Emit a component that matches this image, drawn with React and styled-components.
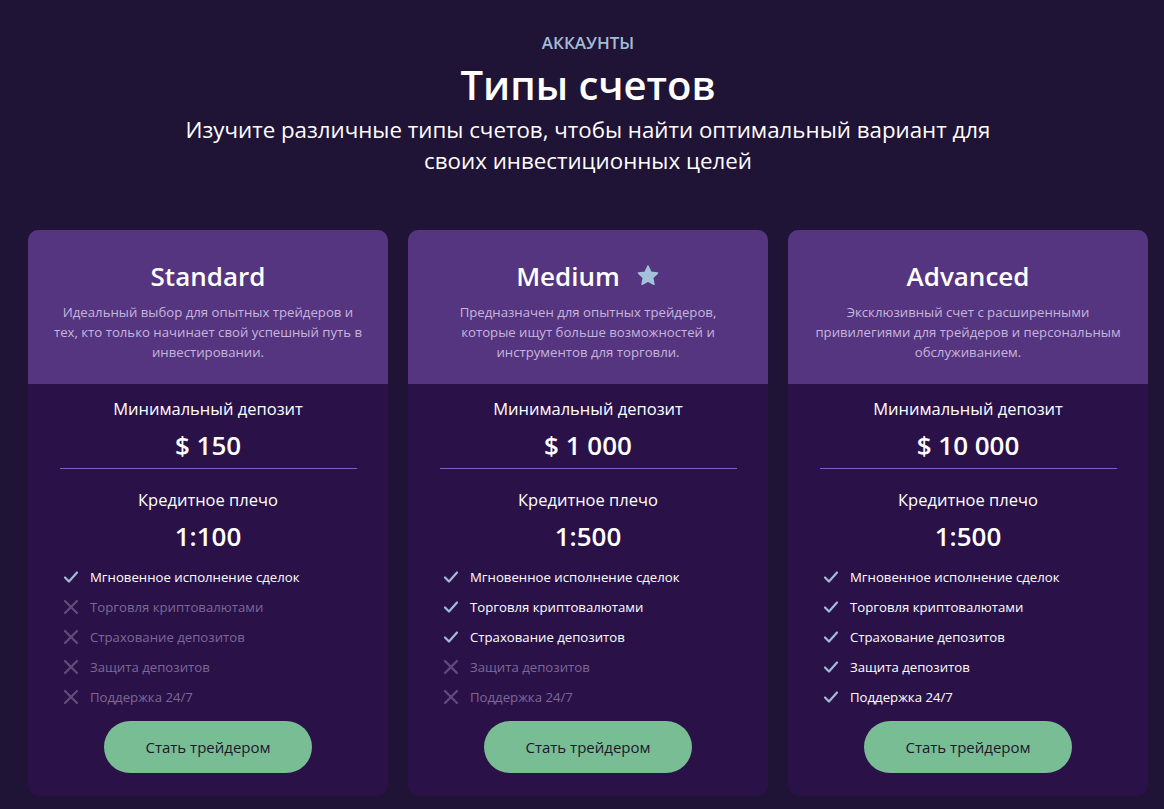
import React from "react";
import styled, { createGlobalStyle } from "styled-components";

const GlobalStyle = createGlobalStyle`
  html, body {
    margin: 0;
    padding: 0;
    background: #1f1336;
    font-family: "Open Sans", "Noto Sans", sans-serif;
  }
`;

const Page = styled.div`
  min-height: 809px;
  background: #1f1336;
  padding: 30px 0 0 28px;
  box-sizing: border-box;
`;

const Wrap = styled.div`
  width: 1120px;
`;

const Header = styled.header`
  display: flex;
  flex-direction: column;
  align-items: center;
  text-align: center;
`;

const Eyebrow = styled.div`
  color: #a3bcd6;
  font-size: 17px;
  font-weight: 600;
  text-transform: uppercase;
  line-height: 26px;
`;

const Title = styled.h1`
  margin: 4px 0 0;
  color: #fff;
  font-size: 40px;
  font-weight: 600;
  line-height: 50px;
`;

const Subtitle = styled.p`
  margin: 4px 0 0;
  max-width: 840px;
  color: #fff;
  font-size: 22.3px;
  line-height: 31px;
`;

const Grid = styled.div`
  display: grid;
  grid-template-columns: repeat(3, 360px);
  gap: 20px;
  margin-top: 54px;
`;

const Card = styled.div`
  background: #2a1249;
  border-radius: 10px;
  overflow: hidden;
  display: flex;
  flex-direction: column;
  height: 566px;
`;

const CardTop = styled.div`
  background: #55357f;
  height: 154px;
  box-sizing: border-box;
  padding: 28px 20px 0;
  text-align: center;
`;

const CardName = styled.h2`
  margin: 0;
  color: #fff;
  font-size: 26px;
  font-weight: 600;
  line-height: 36px;
  display: flex;
  justify-content: center;
  align-items: center;
  gap: 16px;
`;

const CardDesc = styled.p`
  margin: 8px 0 0;
  color: #c6b5dc;
  font-size: 13.2px;
  line-height: 20px;
`;

const CardBody = styled.div`
  display: flex;
  flex-direction: column;
  align-items: center;
  padding: 12px 32px 0;
`;

const Label = styled.div`
  color: #fff;
  font-size: 16.5px;
  line-height: 26px;
`;

const Value = styled.div`
  color: #fff;
  font-size: 26px;
  font-weight: 600;
  line-height: 34px;
  margin-top: 6px;
`;

const Divider = styled.div`
  width: 297px;
  height: 1px;
  background: #7b5fc4;
  margin: 6px 0 18px;
`;

const Features = styled.ul`
  list-style: none;
  margin: 9px 0 0;
  padding: 0 0 0 3px;
  align-self: stretch;
`;

const Feature = styled.li`
  display: flex;
  align-items: center;
  gap: 11px;
  height: 30px;
  font-size: 13.2px;
  color: ${(p) => (p.on ? "#ffffff" : "#7c6896")};
`;

const Button = styled.button`
  margin-top: 9px;
  width: 208px;
  height: 52px;
  border: none;
  border-radius: 26px;
  background: #78bd93;
  color: #1d1530;
  font-family: inherit;
  font-size: 15px;
  cursor: pointer;
`;

const Check = () => (
  <svg width="16" height="16" viewBox="0 0 16 16" fill="none">
    <path d="M2 8.5l4 4 8-9" stroke="#a3bcd6" strokeWidth="2.2" strokeLinecap="round" strokeLinejoin="round" />
  </svg>
);

const Cross = () => (
  <svg width="16" height="16" viewBox="0 0 16 16" fill="none">
    <path d="M2 2l12 12M14 2L2 14" stroke="#5f4c7a" strokeWidth="2.3" strokeLinecap="round" />
  </svg>
);

const Star = () => (
  <svg width="24" height="24" viewBox="0 0 24 24">
    <path
      d="M12 2.2l2.9 6.1 6.6.8-4.9 4.6 1.3 6.6L12 17.1l-5.9 3.2 1.3-6.6-4.9-4.6 6.6-.8z"
      fill="#a3c1da"
      stroke="#a3c1da"
      strokeWidth="1.6"
      strokeLinejoin="round"
    />
  </svg>
);

const featureNames = [
  "Мгновенное исполнение сделок",
  "Торговля криптовалютами",
  "Страхование депозитов",
  "Защита депозитов",
  "Поддержка 24/7",
];

const plans = [
  {
    name: "Standard",
    desc: [
      "Идеальный выбор для опытных трейдеров и",
      "тех, кто только начинает свой успешный путь в",
      "инвестировании.",
    ],
    deposit: "$ 150",
    leverage: "1:100",
    included: 1,
  },
  {
    name: "Medium",
    star: true,
    desc: [
      "Предназначен для опытных трейдеров,",
      "которые ищут больше возможностей и",
      "инструментов для торговли.",
    ],
    deposit: "$ 1 000",
    leverage: "1:500",
    included: 3,
  },
  {
    name: "Advanced",
    desc: [
      "Эксклюзивный счет с расширенными",
      "привилегиями для трейдеров и персональным",
      "обслуживанием.",
    ],
    deposit: "$ 10 000",
    leverage: "1:500",
    included: 5,
  },
];

export default function App() {
  return (
    <>
      <GlobalStyle />
      <Page>
        <Wrap>
          <Header>
            <Eyebrow>Аккаунты</Eyebrow>
            <Title>Типы счетов</Title>
            <Subtitle>
              Изучите различные типы счетов, чтобы найти оптимальный вариант для своих инвестиционных целей
            </Subtitle>
          </Header>
          <Grid>
            {plans.map((plan) => (
              <Card key={plan.name}>
                <CardTop>
                  <CardName>
                    {plan.name}
                    {plan.star && <Star />}
                  </CardName>
                  <CardDesc>
                    {plan.desc.map((line, i) => (
                      <React.Fragment key={i}>
                        {i > 0 && <br />}
                        {line}
                      </React.Fragment>
                    ))}
                  </CardDesc>
                </CardTop>
                <CardBody>
                  <Label>Минимальный депозит</Label>
                  <Value>{plan.deposit}</Value>
                  <Divider />
                  <Label>Кредитное плечо</Label>
                  <Value>{plan.leverage}</Value>
                  <Features>
                    {featureNames.map((f, i) => {
                      const on = i < plan.included;
                      return (
                        <Feature key={f} on={on}>
                          {on ? <Check /> : <Cross />}
                          {f}
                        </Feature>
                      );
                    })}
                  </Features>
                  <Button>Стать трейдером</Button>
                </CardBody>
              </Card>
            ))}
          </Grid>
        </Wrap>
      </Page>
    </>
  );
}
